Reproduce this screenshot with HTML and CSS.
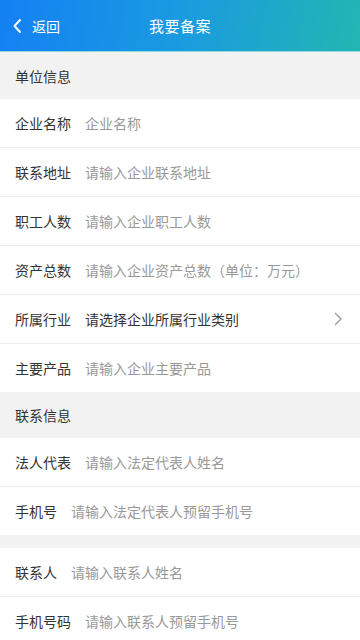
FILE: index.html
```html
<!DOCTYPE html>
<html lang="zh">
<head>
<meta charset="utf-8">
<link rel="stylesheet" href="styles.css">
</head>
<body>
<div class="page">
  <header class="topbar">
    <div class="back">
      <svg class="back-icon" width="10" height="16" viewBox="0 0 10 16"><path d="M8 2 L2.5 8 L8 14" fill="none" stroke="#fff" stroke-width="2" stroke-linecap="round" stroke-linejoin="round"/></svg>
      <span>返回</span>
    </div>
    <div class="title">我要备案</div>
  </header>

  <div class="section first">单位信息</div>
  <div class="group">
    <div class="row"><span class="label">企业名称</span><span class="ph">企业名称</span></div>
    <div class="row"><span class="label">联系地址</span><span class="ph">请输入企业联系地址</span></div>
    <div class="row"><span class="label">职工人数</span><span class="ph">请输入企业职工人数</span></div>
    <div class="row"><span class="label">资产总数</span><span class="ph">请输入企业资产总数（单位：万元）</span></div>
    <div class="row"><span class="label">所属行业</span><span class="ph dark">请选择企业所属行业类别</span>
      <svg class="chev" width="9" height="14" viewBox="0 0 9 14"><path d="M1.5 1.5 L7 7 L1.5 12.5" fill="none" stroke="#999" stroke-width="1.4" stroke-linecap="round" stroke-linejoin="round"/></svg>
    </div>
    <div class="row"><span class="label">主要产品</span><span class="ph">请输入企业主要产品</span></div>
  </div>

  <div class="section second">联系信息</div>
  <div class="group">
    <div class="row"><span class="label">法人代表</span><span class="ph">请输入法定代表人姓名</span></div>
    <div class="row"><span class="label">手机号</span><span class="ph">请输入法定代表人预留手机号</span></div>
  </div>
  <div class="spacer"></div>
  <div class="group">
    <div class="row"><span class="label">联系人</span><span class="ph">请输入联系人姓名</span></div>
    <div class="row"><span class="label">手机号码</span><span class="ph">请输入联系人预留手机号</span></div>
  </div>
</div>
</body>
</html>
```

FILE: styles.css
```css
* { box-sizing: border-box; }
html, body { margin: 0; padding: 0; }
body {
  font-family: "Noto Sans CJK SC", "Noto Sans", sans-serif;
  background: #f2f2f2;
  width: 360px;
  height: 640px;
  overflow: hidden;
}
.page { display: flex; flex-direction: column; }
.topbar {
  height: 52px;
  position: relative;
  display: flex;
  align-items: center;
  justify-content: center;
  background: linear-gradient(100deg, #1480f4 0%, #1a9be0 50%, #22b6b2 100%);
  border-bottom: 1px solid #8fdbe0;
  color: #fff;
}
.back {
  position: absolute;
  left: 12px;
  top: 0;
  bottom: 0;
  display: flex;
  align-items: center;
  gap: 10px;
  font-size: 14px;
  color: #fff;
}
.back-icon { display: block; }
.title { font-size: 15px; letter-spacing: 0.5px; }
.section {
  background: #f2f2f2;
  color: #333;
  font-size: 14px;
  padding-left: 15px;
  display: flex;
  align-items: center;
}
.section.first { height: 47px; }
.section.second { height: 46px; }
.group { background: #fff; }
.row {
  height: 49px;
  display: flex;
  align-items: center;
  padding: 0 14px 0 15px;
  border-bottom: 1px solid #ececec;
}
.row:last-child { border-bottom: none; height: 48px; }
.label { color: #333; font-size: 14px; margin-right: 14px; white-space: nowrap; }
.ph { color: #999; font-size: 14px; flex: 1; white-space: nowrap; }
.ph.dark { color: #333; }
.chev { display: block; margin-right: 3px; }
.spacer { height: 13px; background: #f2f2f2; }
```
